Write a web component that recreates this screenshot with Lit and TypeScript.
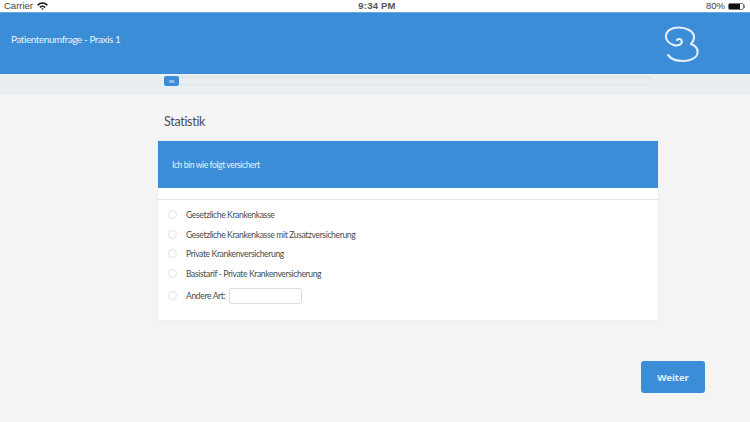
import { LitElement, html, css, svg } from "lit";
import { customElement } from "lit/decorators.js";

const options = [
  "Gesetzliche Krankenkasse",
  "Gesetzliche Krankenkasse mit Zusatzversicherung",
  "Private Krankenversicherung",
  "Basistarif - Private Krankenversicherung",
];

@customElement("app-root")
export class AppRoot extends LitElement {
  static styles = css`
    :host { display: block; width: 750px; height: 422px; overflow: hidden; background: #f4f4f4; font-family: Lato, "Liberation Sans", sans-serif; }
    .status { height: 12px; background: #fff; display: grid; grid-template-columns: 1fr auto 1fr; align-items: center; padding: 0 4px; font-family: "Liberation Sans", sans-serif; font-size: 9.5px; color: #444; line-height: 12px; }
    .status .left { display: flex; align-items: center; gap: 4px; }
    .status .right { display: flex; justify-content: flex-end; align-items: center; gap: 3px; }
    .status .time { font-weight: 700; color: #555; padding-left: 4px; letter-spacing: .2px; }
    .batt { width: 16px; height: 7px; border: 1px solid #777; border-radius: 2px; box-sizing: border-box; background: #fff; }
    .batt div { width: 80%; height: 100%; background: #111; }
    .nub { width: 1px; height: 3px; background: #888; margin: 0 1px 0 -3px; }
    .header { height: 62px; background: #3c8dd7; border-top: 1px solid #6aa8df; box-sizing: border-box; display: flex; justify-content: space-between; align-items: center; padding: 0 51px 0 11px; color: #e8f2fb; font-size: 10px; letter-spacing: -.45px; }
    .header .title { margin-top: -9px; }
    .progress-strip { height: 21px; background: #ebeef0; padding: 2px 99px 0 164px; box-sizing: border-box; display: flex; align-items: flex-start; }
    .badge { width: 15px; height: 10px; background: #3c8dd7; border-radius: 2px; color: #dcebf8; font-size: 4px; font-weight: 700; display: flex; align-items: center; justify-content: center; }
    .track { flex: 1; height: 9px; box-sizing: border-box; border: 1px solid #e3e6e8; border-left: 0; border-radius: 0 2px 2px 0; border-top: 2px solid #dfe3e6; }
    .main { padding: 19px 92px 0 158px; }
    h1 { margin: 0 0 11px 6px; font-size: 12.5px; line-height: 16px; font-weight: 400; color: #4a4f52; letter-spacing: -.3px; }
    .card { background: #fff; box-shadow: 0 0 1px #d6d6d6; height: 179px; }
    .question { height: 47px; background: #3c8dd7; display: flex; align-items: center; padding-left: 14px; color: #e6f0fa; font-size: 8.6px; letter-spacing: -.42px; }
    .rule { height: 11px; border-bottom: 1px solid #e6e6e6; }
    .list { padding-top: 5.5px; display: flex; flex-direction: column; }
    .opt { height: 19.6px; display: flex; align-items: center; padding-left: 10px; color: #454b4e; font-size: 8.6px; letter-spacing: -.38px; }
    .radio { width: 7px; height: 7px; border-radius: 50%; border: 1px solid #dfe1e2; margin-right: 9px; margin-top: -1px; flex: none; background: #fff; }
    .other { height: 24px; }
    .other input { width: 73px; height: 16px; box-sizing: border-box; margin: 0 0 0 3.500px; border: 1px solid #dcdfe1; border-radius: 2px; background: #fff; padding: 0; }
    .foot { display: flex; justify-content: flex-end; padding: 41px 45px 0 0; }
    .next { width: 64px; height: 32px; border: 0; border-radius: 3px; background: #3c8dd7; color: #e3eefa; font-family: "Open Sans", Inter, sans-serif; font-weight: 700; font-size: 9.5px; padding: 0; }
    .logo { display: block; margin-top: 1px; }
  `;

  render() {
    return html`
      <div class="status">
        <div class="left"><span>Carrier</span>
          <svg width="11" height="8" viewBox="0 0 11 8"><path fill="#222" d="M0 2.600C3-.7 8-.7 11 2.600L9.800 3.900C7.500 1.400 3.500 1.400 1.200 3.900zM2.300 5C4 3 7 3 8.700 5L7.500 5.900C6.500 4.600 4.500 4.600 3.500 5.900zM5.500 8L4.200 6.700C5 6 6 6 6.800 6.700z"/></svg>
        </div>
        <div class="time">9:34 PM</div>
        <div class="right"><span>80%</span><div class="batt"><div></div></div><div class="nub"></div></div>
      </div>
      <div class="header">
        <div class="title">Patientenumfrage - Praxis 1</div>
        <svg class="logo" width="36" height="38" viewBox="0 0 36 38" fill="none" stroke="#e6f0fa" stroke-width="2.100" stroke-linecap="round" stroke-linejoin="round">
          ${svg`<path d="M14 15c1.800-1.800 5-.8 4.800 2 -.3 3-4.500 4.300-8.300 3C6 18.500 2.500 15 3 10.500 3.500 5.500 9 2.500 15.500 2.500 23 2.500 31 6 31 12 31 15 30 17 28 19 32.500 20.500 35 24 34.500 28 34 33 27 36 20 36 14 36 8 34 5 30"/>`}
        </svg>
      </div>
      <div class="progress-strip"><div class="badge">3%</div><div class="track"></div></div>
      <div class="main">
        <h1>Statistik</h1>
        <div class="card">
          <div class="question">Ich bin wie folgt versichert</div>
          <div class="rule"></div>
          <div class="list">
            ${options.map((o) => html`<div class="opt"><span class="radio"></span>${o}</div>`)}
            <div class="opt other"><span class="radio"></span>Andere Art:<input type="text" /></div>
          </div>
        </div>
      </div>
      <div class="foot"><button class="next">Weiter</button></div>
    `;
  }
}
